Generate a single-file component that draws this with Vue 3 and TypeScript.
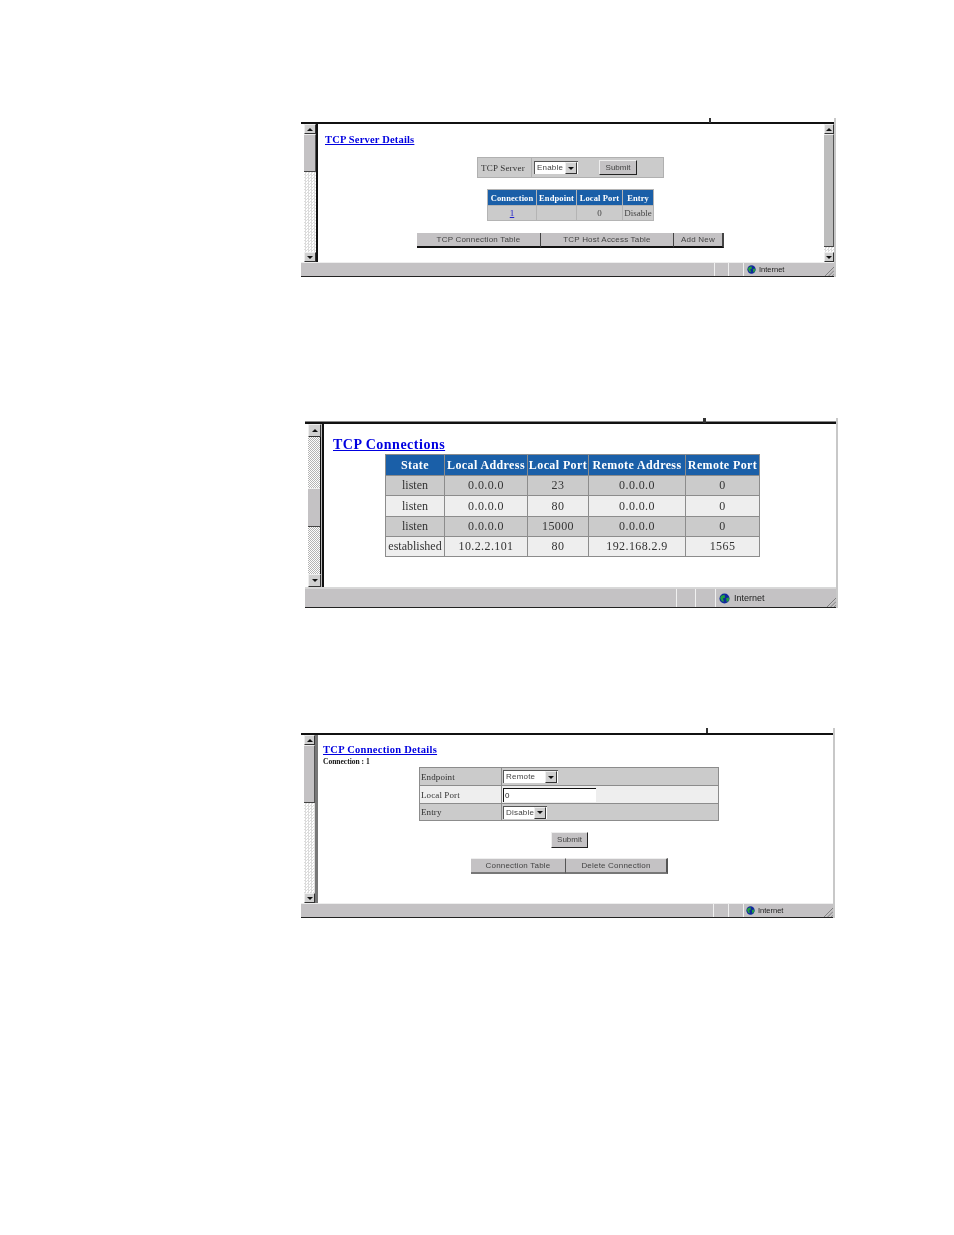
<script setup lang="ts">
const connections = [
  { state: 'listen', local: '0.0.0.0', lport: '23', remote: '0.0.0.0', rport: '0', h: 19, alt: false },
  { state: 'listen', local: '0.0.0.0', lport: '80', remote: '0.0.0.0', rport: '0', h: 20, alt: true },
  { state: 'listen', local: '0.0.0.0', lport: '15000', remote: '0.0.0.0', rport: '0', h: 19, alt: false },
  { state: 'established', local: '10.2.2.101', lport: '80', remote: '192.168.2.9', rport: '1565', h: 19, alt: true },
]
</script>

<template>
  <div class="page">
    <!-- Window 1 -->
    <section class="win win1">
      <i class="tick"></i>
      <div class="view">
        <div class="sb">
          <b class="arrow up"></b><b class="thumb"></b><b class="dither"></b><b class="arrow down"></b>
        </div>
        <div class="rule"></div>
        <div class="content">
          <a class="title">TCP Server Details</a>
          <table class="grid form">
            <colgroup><col style="width:53px" /><col style="width:131px" /></colgroup>
            <tbody>
              <tr>
                <td class="lab">TCP Server</td>
                <td class="ctl">
                  <span class="select s-enable"><span class="val">Enable</span><b class="arrow down"></b></span>
                  <button class="btn submit">Submit</button>
                </td>
              </tr>
            </tbody>
          </table>
          <table class="grid small">
            <colgroup>
              <col style="width:48px" /><col style="width:39px" /><col style="width:45px" /><col style="width:30px" />
            </colgroup>
            <thead><tr><th>Connection</th><th>Endpoint</th><th>Local Port</th><th>Entry</th></tr></thead>
            <tbody><tr><td><a class="link">1</a></td><td></td><td>0</td><td>Disable</td></tr></tbody>
          </table>
          <nav class="nav">
            <button class="tab t1">TCP Connection Table</button>
            <button class="tab t2">TCP Host Access Table</button>
            <button class="tab t3">Add New</button>
          </nav>
        </div>
        <div class="sb right">
          <b class="arrow up"></b><b class="thumb"></b><b class="dither"></b><b class="arrow down"></b>
        </div>
      </div>
      <footer class="status">
        <span class="grow"></span><span class="pane p1"></span><span class="pane p2"></span>
        <span class="zone">
          <svg class="globe" viewBox="0 0 10 10"><circle cx="5" cy="5" r="4.6" fill="#10289c" /><path d="M2 2.5 5 1.5 5.5 4 3.5 5 4.5 8 2.5 7.5 1 4.5ZM6.5 4.5 9 4 9.2 6.5 7 8.5Z" fill="#20a040" /></svg>
          <span>Internet</span>
        </span>
        <svg class="grip" viewBox="0 0 10 10"><path d="M0 10 10 0M4 10 10 4M8 10 10 8" stroke="#777" fill="none" /></svg>
      </footer>
    </section>

    <!-- Window 2 -->
    <section class="win win2">
      <i class="tick"></i>
      <div class="view">
        <div class="sb">
          <b class="arrow up"></b><b class="dither d1"></b><b class="thumb"></b><b class="dither"></b><b class="arrow down"></b>
        </div>
        <div class="rule"></div>
        <div class="content">
          <a class="title">TCP Connections</a>
          <table class="grid large">
            <colgroup>
              <col style="width:58px" /><col style="width:82px" /><col style="width:60px" /><col style="width:96px" /><col style="width:73px" />
            </colgroup>
            <thead><tr><th>State</th><th>Local Address</th><th>Local Port</th><th>Remote Address</th><th>Remote Port</th></tr></thead>
            <tbody>
              <tr v-for="(c, i) in connections" :key="i" :class="{ alt: c.alt }" :style="{ height: c.h + 'px' }">
                <td class="state">{{ c.state }}</td><td>{{ c.local }}</td><td>{{ c.lport }}</td><td>{{ c.remote }}</td><td>{{ c.rport }}</td>
              </tr>
            </tbody>
          </table>
        </div>
      </div>
      <footer class="status">
        <span class="grow"></span><span class="pane p1"></span><span class="pane p2"></span>
        <span class="zone">
          <svg class="globe" viewBox="0 0 10 10"><circle cx="5" cy="5" r="4.6" fill="#10289c" /><path d="M2 2.5 5 1.5 5.5 4 3.5 5 4.5 8 2.5 7.5 1 4.5ZM6.5 4.5 9 4 9.2 6.5 7 8.5Z" fill="#20a040" /></svg>
          <span>Internet</span>
        </span>
        <svg class="grip" viewBox="0 0 10 10"><path d="M0 10 10 0M4 10 10 4M8 10 10 8" stroke="#777" fill="none" /></svg>
      </footer>
    </section>

    <!-- Window 3 -->
    <section class="win win3">
      <i class="tick"></i>
      <div class="view">
        <div class="sb">
          <b class="arrow up"></b><b class="thumb"></b><b class="dither"></b><b class="arrow down"></b>
        </div>
        <div class="rule"></div>
        <div class="content">
          <a class="title">TCP Connection Details</a>
          <p class="sub">Connection : 1</p>
          <table class="grid detail">
            <colgroup><col style="width:81px" /><col style="width:216px" /></colgroup>
            <tbody>
              <tr class="r1">
                <td class="lab">Endpoint</td>
                <td class="ctl"><span class="select s-remote"><span class="val">Remote</span><b class="arrow down"></b></span></td>
              </tr>
              <tr class="alt r2">
                <td class="lab">Local Port</td>
                <td class="ctl"><span class="input">0</span></td>
              </tr>
              <tr class="r3">
                <td class="lab">Entry</td>
                <td class="ctl"><span class="select s-disable"><span class="val">Disable</span><b class="arrow down"></b></span></td>
              </tr>
            </tbody>
          </table>
          <button class="btn submit2">Submit</button>
          <nav class="nav">
            <button class="tab t4">Connection Table</button>
            <button class="tab t5">Delete Connection</button>
          </nav>
        </div>
      </div>
      <footer class="status">
        <span class="grow"></span><span class="pane p1"></span><span class="pane p2"></span>
        <span class="zone">
          <svg class="globe" viewBox="0 0 10 10"><circle cx="5" cy="5" r="4.6" fill="#10289c" /><path d="M2 2.5 5 1.5 5.5 4 3.5 5 4.5 8 2.5 7.5 1 4.5ZM6.5 4.5 9 4 9.2 6.5 7 8.5Z" fill="#20a040" /></svg>
          <span>Internet</span>
        </span>
        <svg class="grip" viewBox="0 0 10 10"><path d="M0 10 10 0M4 10 10 4M8 10 10 8" stroke="#777" fill="none" /></svg>
      </footer>
    </section>
  </div>
</template>

<style scoped>
.page { height: 1235px; box-sizing: border-box; padding-top: 118px; background: #fff; font-family: "Liberation Serif", serif; color: #333; overflow: hidden; }
.win { position: relative; box-sizing: border-box; display: flex; flex-direction: column; border-right: 2px solid #c8c8c8; filter: blur(0.3px); }
.win1 { margin-left: 301px; width: 535px; height: 159px; padding-top: 4px; }
.win2 { margin: 141px 0 0 305px; width: 533px; height: 190px; padding-top: 4px; }
.win3 { margin: 120px 0 0 301px; width: 534px; height: 190px; padding-top: 5px; }
.tick { position: absolute; top: 0; width: 2px; height: 5px; background: #333; }
.win1 .tick { left: 408px; }
.win2 .tick { left: 398px; width: 3px; }
.win3 .tick { left: 405px; }
.view { flex: 1; min-height: 0; display: flex; border-top: 2px solid #111; padding-left: 3px; }
.win2 .view { border-top: 2px solid #111; box-shadow: 0 -1px 0 #888; }
.sb { width: 12px; display: flex; flex-direction: column; flex: none; }
.win2 .sb { width: 13px; }
.sb.right { width: 10px; }
.sb b { display: block; flex: none; box-sizing: border-box; }
.arrow { position: relative; height: 10px; background: #d0d0d0; border-right: 1px solid #333; border-bottom: 1px solid #333; border-top: 1px solid #eee; border-left: 1px solid #eee; }
.arrow::after { content: ""; position: absolute; left: 50%; top: 50%; margin: -1.5px 0 0 -3px; border-left: 3px solid transparent; border-right: 3px solid transparent; }
.arrow.up::after { border-bottom: 3px solid #111; }
.arrow.down::after { border-top: 3px solid #111; }
.thumb { background: #c4c2c4; border-right: 1px solid #555; border-bottom: 1px solid #444; border-top: 1px solid #eee; }
.sb .dither { flex: 1; background: repeating-conic-gradient(#dcdcdc 0 25%, #fff 0 50%) 0 0 / 3px 3px; }
.win1 .sb .thumb { height: 38px; }
.win1 .sb.right .thumb { height: 113px; background: #bdbdbd; }
.win2 .sb .arrow { height: 13px; }
.win2 .sb .thumb { height: 39px; }
.win2 .sb .dither { background: repeating-conic-gradient(#b4b4b4 0 25%, #fff 0 50%) 0 0 / 2px 2px; }
.win2 .sb .d1 { flex: none; height: 51px; }
.win3 .sb .thumb { height: 58px; }
.win3 .sb { width: 11px; }
.rule { flex: none; width: 2px; margin-left: 0; background: #111; }
.win2 .rule { width: 5px; background: linear-gradient(90deg, #111 0 1px, #bbb 1px 2px, #111 2px 4px, #fff 4px); margin-left: -1px; }
.win3 .rule { width: 3px; background: #777; margin-left: 0; }
.content { flex: 1; min-width: 0; overflow: hidden; background: #fff; }
.title { display: block; width: max-content; font-weight: 700; color: #0000e0; text-decoration: underline; }
.win1 .title { margin: 9px 0 0 7px; font-size: 10.5px; line-height: 14px; letter-spacing: 0.18px; }
.win2 .title { margin: 13px 0 0 8px; font-size: 14px; line-height: 16px; letter-spacing: 0.5px; }
.win3 .title { margin: 8px 0 0 5px; font-size: 10.5px; line-height: 14px; letter-spacing: 0.28px; }
.sub { margin: 0 0 0 5px; font-size: 7.5px; line-height: 10px; font-weight: 700; color: #111; }
.grid { table-layout: fixed; border-collapse: separate; border-spacing: 1px; background: #9a9a9a; }
.grid td { background: #cbcbcb; padding: 0; text-align: center; overflow: hidden; white-space: nowrap; }
.grid th { background: #1a5fa8; color: #fff; padding: 0; font-weight: 700; text-align: center; white-space: nowrap; overflow: hidden; }
.grid tr.alt td { background: #eeeeee; }
.form { margin: 10px 0 0 159px; width: 187px; height: 21px; background: #b0b0b0; font-size: 9px; }
.grid .lab { text-align: left; padding-left: 3px; letter-spacing: 0.2px; }
.grid .ctl { text-align: left; padding-left: 1px; }
.form .ctl { display: flex; align-items: center; height: 19px; box-sizing: border-box; padding-left: 2px; }
.select { display: inline-flex; box-sizing: border-box; align-items: center; justify-content: space-between; height: 13px; background: #fff; border-top: 1px solid #555; border-left: 1px solid #555; font: 8px/1 "Liberation Sans", sans-serif; color: #444; vertical-align: middle; padding-right: 1px; }
.val { padding-left: 2px; letter-spacing: 0.2px; }
.select .arrow { width: 10px; height: 10px; }
.s-enable { width: 44px; }
.s-remote { width: 55px; }
.s-disable { width: 44px; }
.btn { box-sizing: border-box; background: #c4c2c4; border: 0; border-top: 1px solid #eee; border-left: 1px solid #eee; border-right: 1px solid #222; border-bottom: 1px solid #222; padding: 0; font: 8px/1 "Liberation Sans", sans-serif; color: #444; }
.submit { margin-left: 21px; width: 38px; height: 15px; }
.small { margin: 11px 0 0 169px; width: 167px; background: #b4b4b4; font-size: 8.5px; }
.small th { height: 15px; letter-spacing: 0.1px; font-size: 8.5px; }
.small td { height: 14px; color: #444; font-size: 9px; }
.link { color: #2222cc; text-decoration: underline; }
.nav { display: flex; }
.win1 .nav { margin: 12px 0 0 99px; height: 15px; }
.win3 .nav { margin: 10px 0 0 153px; height: 16px; }
.tab { box-sizing: border-box; height: 100%; background: #c4c2c4; border: 0; padding: 0; font: 8px/1 "Liberation Sans", sans-serif; letter-spacing: 0.2px; color: #444; flex: none; }
.win1 .tab { border-bottom: 2px solid #111; border-right: 1px solid #444; }
.win3 .tab { border-bottom: 2px solid #777; border-right: 1px solid #555; border-top: 1px solid #eee; }
.t1 { width: 124px; }
.t2 { width: 133px; }
.t3 { width: 50px; border-right-width: 2px !important; }
.t4 { width: 95px; }
.t5 { width: 102px; border-right-width: 2px !important; }
.large { margin: 1px 0 0 60px; width: 375px; font-size: 12px; background: #8c8c8c; }
.large thead tr { height: 20px; }
.large th { letter-spacing: 0.4px; }
.large td { letter-spacing: 0.4px; color: #333; }
.large td.state { letter-spacing: 0; }
.detail { margin: 0 0 0 101px; width: 300px; font-size: 9px; background: #8c8c8c; }
.detail .lab { padding-left: 1px; letter-spacing: 0.1px; }
.r1 { height: 17px; }
.r2 { height: 17px; }
.r3 { height: 16px; }
.input { display: block; box-sizing: border-box; width: 93px; height: 14px; background: #fff; border-top: 1px solid #111; border-left: 1px solid #111; font: 8px/13px "Liberation Sans", sans-serif; color: #222; padding-left: 1px; }
.submit2 { display: block; margin: 11px 0 0 233px; width: 37px; height: 16px; }
.status { flex: none; display: flex; align-items: stretch; height: 13px; background: #c4c2c4; border-top: 1px solid #eee; border-bottom: 1px solid #222; font: 7.5px/12px "Liberation Sans", sans-serif; color: #222; }
.win2 .status { height: 18px; font-size: 9px; line-height: 17px; border-top: 2px solid #d8d8d8; }
.grow { flex: 1; }
.pane { flex: none; box-sizing: border-box; border-left: 1px solid #f0f0f0; }
.p1 { width: 14px; }
.p2 { width: 15px; }
.win2 .p1 { width: 19px; }
.win2 .p2 { width: 20px; }
.win3 .p1 { width: 15px; }
.zone { flex: none; box-sizing: border-box; display: flex; align-items: center; gap: 3px; width: 91px; border-left: 1px solid #f0f0f0; padding-left: 3px; }
.win2 .zone { width: 121px; gap: 4px; }
.win3 .zone { width: 90px; padding-left: 2px; }
.globe { width: 9px; height: 9px; flex: none; }
.win2 .globe { width: 11px; height: 11px; }
.grip { position: absolute; right: 0; bottom: 1px; width: 9px; height: 9px; }
</style>
